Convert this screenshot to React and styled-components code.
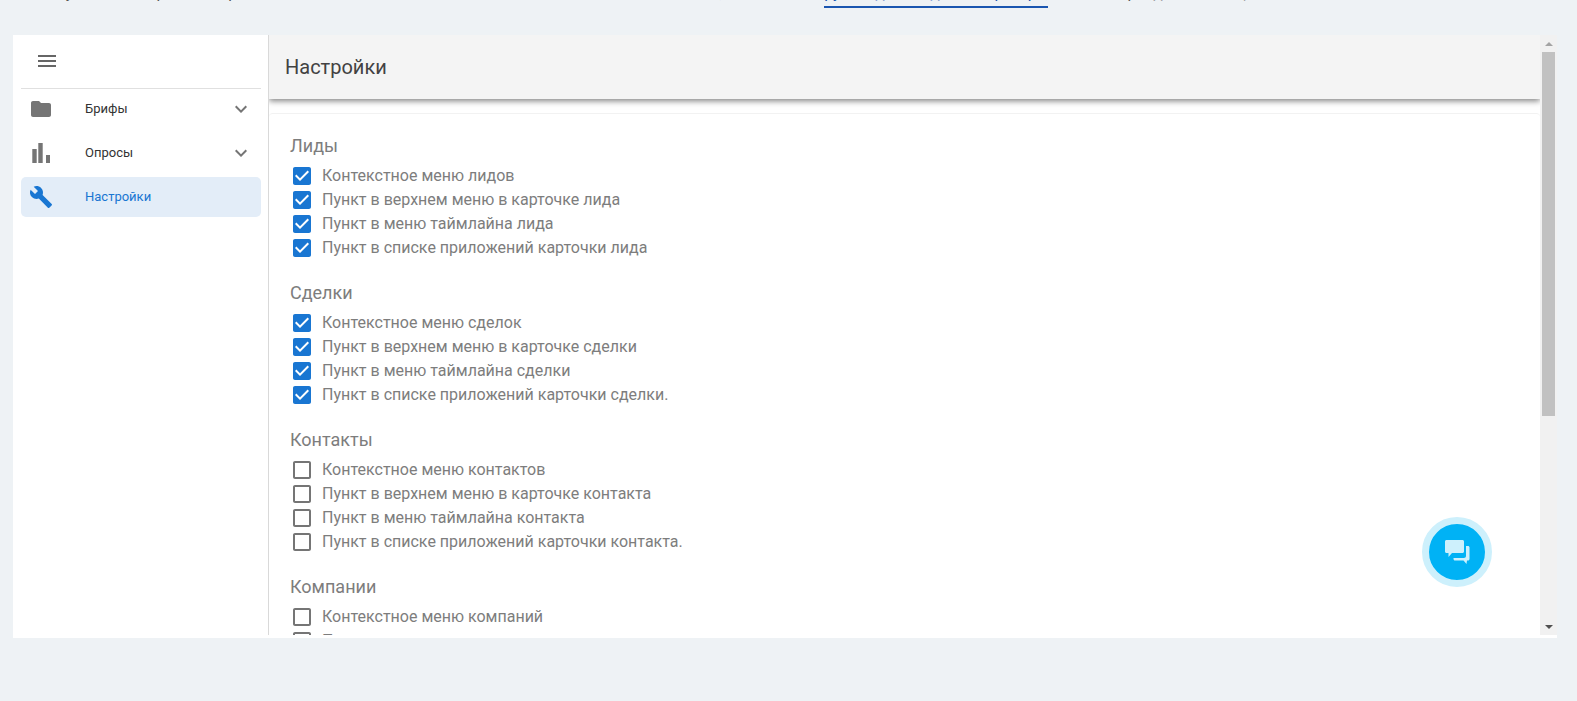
import React from "react";
import styled, { createGlobalStyle } from "styled-components";

const Global = createGlobalStyle`
  html, body { margin: 0; padding: 0; background: #eef1f5; overflow: hidden; }
  body { font-family: Roboto, "Noto Sans", sans-serif; }
`;
const Page = styled.div`
  width: 1577px; height: 701px; overflow: hidden; background: #eef2f5;
  display: flex; flex-direction: column;
`;
const TopNote = styled.div`
  height: 8px; overflow: hidden; margin-bottom: 27px; flex: none;
`;
const TopLine = styled.p`
  margin: -17px 0 0 35px; height: 25px; line-height: 19px; font-size: 16px;
  white-space: nowrap; color: #555;
`;
const TopLink = styled.a`
  display: inline; color: #1a56b0; border-bottom: 2px solid #1a56b0; padding-bottom: 4px;
  text-decoration: none; letter-spacing: -0.15px;
`;
const AppBox = styled.div`
  flex: none; margin-left: 13px; width: 1544px; height: 603px; background: #fff;
`;
const Frame = styled.div`
  position: relative; display: flex; height: 600px; overflow: hidden;
`;
const Sidebar = styled.aside`
  flex: none; width: 255px; border-right: 1px solid #d9d9d9;
  display: flex; flex-direction: column;
`;
const MenuBar = styled.div`
  height: 51px; margin: 0 7px 0 8px; border-bottom: 1px solid #e0e0e0; display: flex; align-items: center;
  padding-left: 14px; padding-bottom: 2px;
  svg { width: 24px; height: 24px; fill: #666; }
`;
const NavList = styled.nav`
  display: flex; flex-direction: column; gap: 4px; margin: 0 7px 0 8px;
`;
const NavItem = styled.div`
  height: 40px; display: flex; align-items: center; border-radius: 5px;
  background: ${p => (p.$active ? "#e3edf8" : "transparent")};
  color: ${p => (p.$active ? "#1976d2" : "#333")};
  font-size: 13px; font-weight: 400;
`;
const NavIcon = styled.span`
  flex: none; width: 64px; padding-left: 8px; box-sizing: border-box; display: flex; align-items: center;
  svg { width: 24px; height: 24px; fill: ${p => (p.$active ? "#1976d2" : "#757575")}; }
`;
const NavLabel = styled.span`
  flex: 1; padding-bottom: 2px;
`;
const Chevron = styled.svg`
  width: 24px; height: 24px; fill: #757575; margin-right: 8px;
`;
const Main = styled.main`
  flex: 1; min-width: 0; display: flex; flex-direction: column; overflow: hidden;
`;
const Header = styled.header`
  flex: none; height: 64px; background: #f4f4f4; display: flex; align-items: center;
  padding-left: 16px; font-size: 20px; color: #424242;
  box-shadow: 0 2px 6px rgba(0,0,0,.5); position: relative;
`;
const Card = styled.section`
  margin-top: 14px; padding: 22px 21px 0; border-top: 1px solid #f2f2f2;
  border-radius: 4px;
`;
const Group = styled.div`
  margin-bottom: 23px;
`;
const GroupTitle = styled.h3`
  margin: 0 0 8px; font-weight: 400; font-size: 18px; line-height: 20px; color: #7d7d7d;
`;
const Row = styled.label`
  display: flex; align-items: center; height: 24px; font-size: 16px; color: #7d7d7d;
  svg { flex: none; width: 24px; height: 24px; margin-right: 8px; fill: ${p => (p.$checked ? "#1976d2" : "#757575")}; }
`;
const RowText = styled.span`
  padding-bottom: 2px;
`;
const Scrollbar = styled.div`
  flex: none; width: 17px; background: #f1f1f1; display: flex; flex-direction: column; align-items: center;
`;
const Arrow = styled.div`
  flex: none; height: 17px; width: 100%; display: flex; align-items: center; justify-content: center;
  &::before {
    content: ""; width: 0; height: 0; border-left: 4px solid transparent; border-right: 4px solid transparent;
    ${p => (p.$down ? "border-top: 4px solid #505050;" : "border-bottom: 4px solid #a3a3a3;")}
  }
`;
const Track = styled.div`
  flex: 1; width: 100%;
`;
const Thumb = styled.div`
  width: 13px; height: 364px; margin: 0 auto; background: #c1c1c1;
`;
const Fab = styled.button`
  position: absolute; left: 1409px; top: 482px; width: 70px; height: 70px; box-sizing: border-box;
  border-radius: 50%; border: 7px solid #cdf0fc; background: #00b2f5; padding: 0;
  display: flex; align-items: center; justify-content: center;
  svg { width: 28px; height: 28px; fill: #cdf0fc; }
`;

const I = {
  menu: "M3 18h18v-2H3v2zm0-5h18v-2H3v2zm0-7v2h18V6H3z",
  folder: "M10 4H4c-1.1 0-1.99.9-1.99 2L2 18c0 1.1.9 2 2 2h16c1.1 0 2-.9 2-2V8c0-1.1-.9-2-2-2h-8l-2-2z",
  wrench: "M22.7 19l-9.1-9.1c.9-2.3.4-5-1.5-6.9-2-2-5-2.4-7.4-1.3L9 6 6 9 1.6 4.7C.4 7.1.9 10.1 2.9 12.1c1.9 1.9 4.6 2.4 6.9 1.5l9.1 9.1c.4.4 1 .4 1.4 0l2.3-2.3c.5-.4.5-1.1.1-1.4z",
  chev: "M16.59 8.59 12 13.17 7.41 8.59 6 10l6 6 6-6z",
  on: "M19 3H5c-1.11 0-2 .9-2 2v14c0 1.1.89 2 2 2h14c1.11 0 2-.9 2-2V5c0-1.1-.89-2-2-2zm-9 14l-5-5 1.41-1.41L10 14.17l7.59-7.59L19 8l-9 9z",
  off: "M19 5v14H5V5h14m0-2H5c-1.1 0-2 .9-2 2v14c0 1.1.9 2 2 2h14c1.1 0 2-.9 2-2V5c0-1.1-.9-2-2-2z",
};
const Ic = ({ d }) => <svg viewBox="0 0 24 24"><path d={d} /></svg>;
const Bars = () => (
  <svg viewBox="0 0 24 24"><path d="M3.3 8h4.4v14H3.300zM9.300 2h4.400v20H9.300zM17 14h4v8h-4z" /></svg>
);

const groups = [
  { title: "Лиды", on: true, items: ["Контекстное меню лидов", "Пункт в верхнем меню в карточке лида", "Пункт в меню таймлайна лида", "Пункт в списке приложений карточки лида"] },
  { title: "Сделки", on: true, items: ["Контекстное меню сделок", "Пункт в верхнем меню в карточке сделки", "Пункт в меню таймлайна сделки", "Пункт в списке приложений карточки сделки."] },
  { title: "Контакты", on: false, items: ["Контекстное меню контактов", "Пункт в верхнем меню в карточке контакта", "Пункт в меню таймлайна контакта", "Пункт в списке приложений карточки контакта."] },
  { title: "Компании", on: false, items: ["Контекстное меню компаний", "Пункт в верхнем меню в карточке компании"] },
];

export default function App() {
  return (
    <Page>
      <Global />
      <TopNote>
        <TopLine>
          Все установки время от времени можно менять: все это описано в нашей или в том месте, что сейчас в <TopLink>руководстве администратора,</TopLink> а также в разделе помощи
        </TopLine>
      </TopNote>
      <AppBox>
        <Frame>
          <Sidebar>
            <MenuBar><Ic d={I.menu} /></MenuBar>
            <NavList>
              <NavItem><NavIcon><Ic d={I.folder} /></NavIcon><NavLabel>Брифы</NavLabel><Chevron viewBox="0 0 24 24"><path d={I.chev} /></Chevron></NavItem>
              <NavItem><NavIcon><Bars /></NavIcon><NavLabel>Опросы</NavLabel><Chevron viewBox="0 0 24 24"><path d={I.chev} /></Chevron></NavItem>
              <NavItem $active><NavIcon $active><Ic d={I.wrench} /></NavIcon><NavLabel>Настройки</NavLabel></NavItem>
            </NavList>
          </Sidebar>
          <Main>
            <Header>Настройки</Header>
            <Card>
              {groups.map(g => (
                <Group key={g.title}>
                  <GroupTitle>{g.title}</GroupTitle>
                  {g.items.map(t => (
                    <Row key={t} $checked={g.on}><Ic d={g.on ? I.on : I.off} /><RowText>{t}</RowText></Row>
                  ))}
                </Group>
              ))}
            </Card>
          </Main>
          <Scrollbar>
            <Arrow />
            <Track><Thumb /></Track>
            <Arrow $down />
          </Scrollbar>
          <Fab aria-label="chat">
            <svg viewBox="0 0 28 28">
              <path d="M2 3.500C2 2.700 2.700 2 3.500 2h16c.8 0 1.500.7 1.500 1.500v10c0 .8-.7 1.500-1.500 1.500H9l-3.500 4v-4h-2C2.700 15 2 14.300 2 13.500z" />
              <path d="M23 8h2c.8 0 1.500.7 1.500 1.500V21c0 .8-.7 1.500-1.500 1.500h-1l-.5 3.500-3-3.500h-8.500c-.8 0-1.500-.7-1.500-1.500V20h10.500c1.100 0 2-.9 2-2z" />
            </svg>
          </Fab>
        </Frame>
      </AppBox>
    </Page>
  );
}
